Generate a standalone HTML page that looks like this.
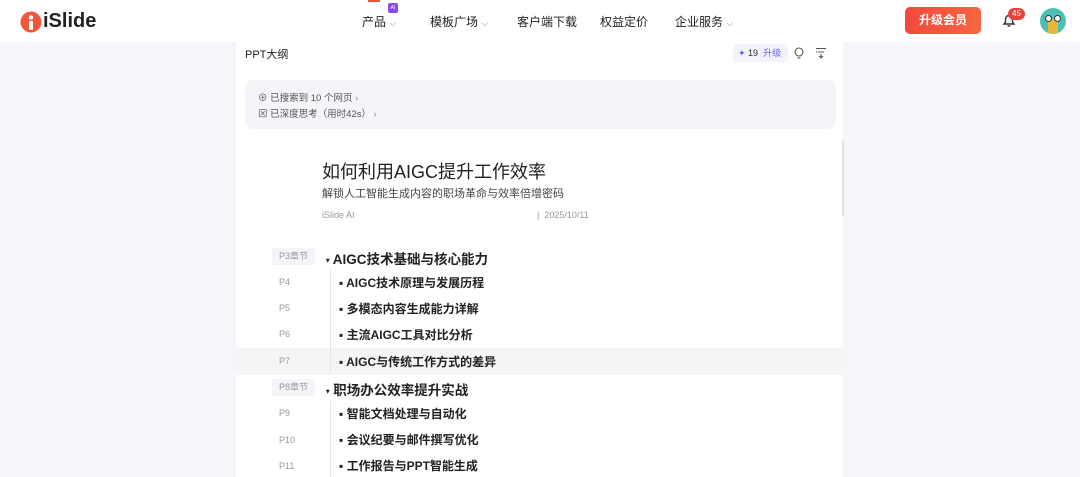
<!DOCTYPE html>
<html><head><meta charset="utf-8"><style>
*{margin:0;padding:0;box-sizing:border-box}
body{width:1080px;height:477px;overflow:hidden;background:#f4f6f9;font-family:"Liberation Sans","Noto Sans CJK SC",sans-serif;color:#222;position:relative}
.a{position:absolute;white-space:nowrap}
.hdr{position:absolute;left:0;top:0;width:1080px;height:42px;background:#fff}
.nav{font-size:12px;color:#222;top:13px}
.main{position:absolute;left:236px;top:42px;width:607px;height:435px;background:#fff}
.lbl{font-size:9px;color:#999}
.sec{font-size:13.5px;font-weight:bold;color:#222}
.it{font-size:12px;font-weight:bold;color:#222}
.chev{font-size:9px;color:#888}
</style></head><body>
<div class="hdr"></div>
<svg class="a" style="left:20px;top:11px" width="22" height="22" viewBox="0 0 22 22"><circle cx="11" cy="11" r="10.5" fill="#f0563a"/><circle cx="11" cy="6.5" r="2.3" fill="#fff"/><rect x="9" y="10" width="4" height="9" rx="1" fill="#fff"/></svg>
<div class="a" style="left:43px;top:10px;font-size:20px;font-weight:bold;color:#222">iSlide</div>
<div class="a nav" style="left:362px">产品 <span class="chev">⌵</span></div>
<div class="a" style="left:388px;top:3px;width:10px;height:10px;background:#8a4cf0;border-radius:2px;font-size:5px;color:#fff;text-align:center;line-height:10px">AI</div>
<div class="a" style="left:368px;top:0;width:12px;height:2px;background:#f0563a"></div>
<div class="a nav" style="left:430px">模板广场 <span class="chev">⌵</span></div>
<div class="a nav" style="left:517px">客户端下载</div>
<div class="a nav" style="left:600px">权益定价</div>
<div class="a nav" style="left:675px">企业服务 <span class="chev">⌵</span></div>
<div class="a" style="left:905px;top:7px;width:76px;height:27px;background:linear-gradient(90deg,#f04a3e,#f6653e);border-radius:5px;color:#fff;font-size:12px;font-weight:bold;text-align:center;line-height:27px">升级会员</div>
<svg class="a" style="left:1001px;top:12px" width="16" height="16" viewBox="0 0 16 16" fill="none" stroke="#333" stroke-width="1.4"><path d="M3 12h10l-1.5-2V7a3.5 3.5 0 0 0-7 0v3z"/><path d="M6.5 14h3"/></svg>
<div class="a" style="left:1008px;top:8px;width:17px;height:12px;background:#e8413b;border-radius:6px;font-size:8px;color:#fff;text-align:center;line-height:12px">45</div>
<div class="a" style="left:1040px;top:8px;width:26px;height:26px;border-radius:50%;background:#4cc1b3;overflow:hidden"><div class="a" style="left:8px;top:11px;width:10px;height:15px;background:#e8b83a;border-radius:3px"></div><div class="a" style="left:5px;top:7px;width:7px;height:7px;border-radius:50%;background:#fff;border:1.5px solid #333"></div><div class="a" style="left:14px;top:7px;width:7px;height:7px;border-radius:50%;background:#fff;border:1.5px solid #333"></div></div>

<div class="main"></div>
<div class="a" style="left:842px;top:140px;width:2px;height:76px;background:#e2e4e8"></div>
<div class="a" style="left:245px;top:46px;font-size:11px;color:#222">PPT大纲</div>
<div class="a" style="left:733px;top:44px;width:55px;height:18px;background:#f2f2fb;border-radius:4px;font-size:9px;line-height:18px;padding-left:5px;color:#333"><span style="color:#6b5cf0">✦</span> 19 &nbsp;<span style="color:#6b5cf0">升级</span></div>
<svg class="a" style="left:793px;top:47px" width="12" height="12" viewBox="0 0 12 12" fill="none" stroke="#555" stroke-width="1.1"><circle cx="6" cy="5" r="4"/><path d="M4.5 11h3"/></svg>
<svg class="a" style="left:815px;top:47px" width="12" height="12" viewBox="0 0 12 12" fill="none" stroke="#555" stroke-width="1.1"><path d="M1 1.5h10M3 5h6M1 5h1M6 7v4M4 9l2 2 2-2"/></svg>
<div class="a" style="left:245px;top:80px;width:591px;height:49px;background:#f3f5f8;border-radius:8px"></div>
<div class="a" style="left:258px;top:90px;font-size:9.5px;color:#555">⊕ 已搜索到 10 个网页 <span class="chev">›</span></div>
<div class="a" style="left:258px;top:106px;font-size:9.5px;color:#555">⊠ 已深度思考（用时42s） <span class="chev">›</span></div>
<div class="a" style="left:322px;top:158px;font-size:18px;color:#222">如何利用AIGC提升工作效率</div>
<div class="a" style="left:322px;top:185px;font-size:11px;color:#444">解锁人工智能生成内容的职场革命与效率倍增密码</div>
<div class="a" style="left:322px;top:210px;font-size:9px;color:#999">iSlide AI</div>
<div class="a" style="left:537px;top:210px;font-size:9px;color:#999">|&nbsp; 2025/10/11</div>

<div class="a" style="left:236px;top:348px;width:607px;height:27px;background:#f5f5f5"></div>
<div class="a" style="left:330px;top:270px;width:1px;height:102px;background:#e5e5e5"></div>
<div class="a" style="left:330px;top:401px;width:1px;height:76px;background:#e5e5e5"></div>

<div class="a lbl" style="left:272px;top:248px;width:43px;height:17px;background:#f3f5f9;line-height:17px;padding-left:7px">P3章节</div>
<div class="a sec" style="left:326px;top:248px"><span style="font-size:7px;vertical-align:middle">▾</span> AIGC技术基础与核心能力</div>
<div class="a lbl" style="left:279px;top:277px">P4</div><div class="a it" style="left:339px;top:274px">▪ AIGC技术原理与发展历程</div>
<div class="a lbl" style="left:279px;top:303px">P5</div><div class="a it" style="left:339px;top:300px">▪ 多模态内容生成能力详解</div>
<div class="a lbl" style="left:279px;top:329px">P6</div><div class="a it" style="left:339px;top:326px">▪ 主流AIGC工具对比分析</div>
<div class="a lbl" style="left:279px;top:356px">P7</div><div class="a it" style="left:339px;top:353px">▪ AIGC与传统工作方式的差异</div>
<div class="a lbl" style="left:272px;top:379px;width:43px;height:17px;background:#f3f5f9;line-height:17px;padding-left:7px">P8章节</div>
<div class="a sec" style="left:326px;top:379px"><span style="font-size:7px;vertical-align:middle">▾</span> 职场办公效率提升实战</div>
<div class="a lbl" style="left:279px;top:408px">P9</div><div class="a it" style="left:339px;top:405px">▪ 智能文档处理与自动化</div>
<div class="a lbl" style="left:279px;top:435px">P10</div><div class="a it" style="left:339px;top:431px">▪ 会议纪要与邮件撰写优化</div>
<div class="a lbl" style="left:279px;top:461px">P11</div><div class="a it" style="left:339px;top:457px">▪ 工作报告与PPT智能生成</div>
</body></html>
